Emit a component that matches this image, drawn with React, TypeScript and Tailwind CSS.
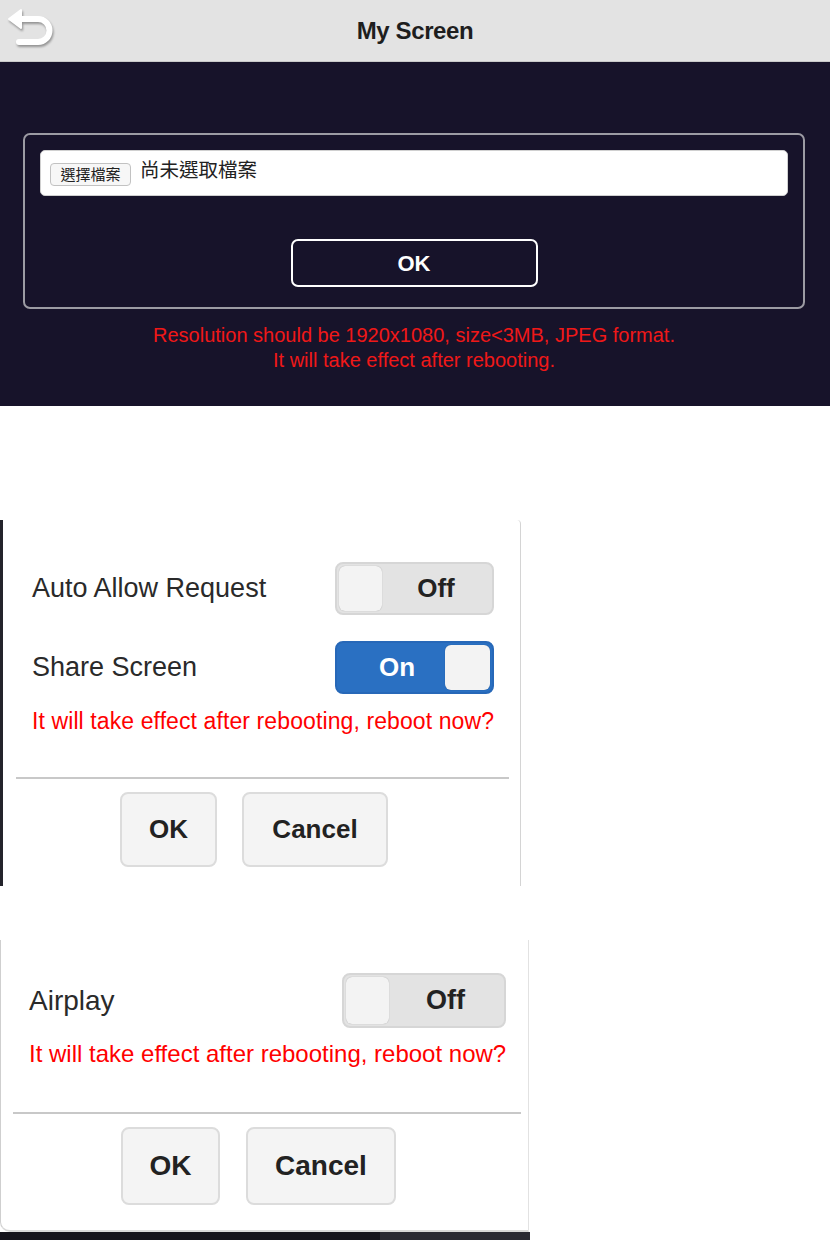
import React, { useState } from 'react';

const sans = { fontFamily: '"Liberation Sans", Arial, sans-serif' };
const cjk = { fontFamily: '"Liberation Sans", "Noto Sans CJK TC", sans-serif' };

const BackIcon: React.FC = () => (
  <svg width="52" height="48" viewBox="0 0 52 48" className="drop-shadow-[1px_2px_1px_rgba(0,0,0,0.35)]">
    <path d="M11 15 H34 A11.5 11.5 0 0 1 34 38 H15" fill="none" stroke="#ffffff" strokeWidth="6" strokeLinecap="round" />
    <path d="M5 15 L17 6 L17 24 Z" fill="#ffffff" strokeLinejoin="round" stroke="#ffffff" strokeWidth="2" />
  </svg>
);

const Toggle: React.FC<{ on: boolean; onClick: () => void; size: string; text: string }> = ({ on, onClick, size, text }) => (
  <button
    onClick={onClick}
    className={`relative ${size} rounded-[8px] border-2 flex items-center p-[2px] shrink-0 ${
      on ? 'bg-[#2a70c2] border-[#2768b8] justify-end' : 'bg-[#e3e3e3] border-[#d6d6d6] justify-start'
    }`}
  >
    {on ? (
      <>
        <span className={`flex-1 text-center pl-[10px] text-white font-bold ${text}`} style={sans}>On</span>
        <span className="w-[45px] h-full rounded-[6px] bg-[#f3f3f3] shadow-[0_0_1px_rgba(0,0,0,0.3)]" />
      </>
    ) : (
      <>
        <span className="w-[43px] h-full rounded-[6px] bg-[#f3f3f3] shadow-[0_0_1px_rgba(0,0,0,0.3)]" />
        <span className={`flex-1 text-center text-[#222] font-bold ${text}`} style={sans}>Off</span>
      </>
    )}
  </button>
);

const DlgButton: React.FC<{ label: string; w: string; text: string }> = ({ label, w, text }) => (
  <button className={`${w} h-full rounded-[8px] bg-[#f4f4f4] border-2 border-[#dcdcdc] ${text} font-bold text-[#222]`} style={sans}>
    {label}
  </button>
);

export default function App() {
  const [autoAllow, setAutoAllow] = useState(false);
  const [share, setShare] = useState(true);
  const [airplay, setAirplay] = useState(false);

  return (
    <div className="w-[830px] h-[1240px] bg-white overflow-hidden" style={sans}>
      {/* Header */}
      <div className="h-[62px] bg-[#e3e3e3] border-b border-[#c9c9c9] flex items-center relative">
        <div className="absolute left-[4px] top-[4px]"><BackIcon /></div>
        <div className="flex-1 text-center text-[24px] font-bold text-[#1e1e1e] tracking-[-0.4px]">My Screen</div>
      </div>

      {/* My Screen upload */}
      <div className="h-[344px] bg-[#17132a] pt-[71px] pl-[23px] pr-[25px]">
        <div className="h-[176px] border-2 border-[#9c9ba3] rounded-[7px] pt-[15px] px-[15px]">
          <div className="h-[46px] bg-white rounded-[5px] border border-[#d0d0d0] flex items-center pl-[9px] gap-[9px]">
            <button className="h-[23px] w-[81px] rounded-[4px] border border-[#c2c2c2] bg-[#f7f7f7] text-[15px] text-[#222] leading-none mt-[2px]" style={cjk}>選擇檔案</button>
            <span className="text-[19.5px] text-[#222] -mt-[4px]" style={cjk}>尚未選取檔案</span>
          </div>
          <div className="flex justify-center mt-[43px]">
            <button className="w-[247px] h-[48px] border-2 border-white rounded-[7px] text-white text-[22px] font-bold">OK</button>
          </div>
        </div>
        <div className="mt-[14px] text-center text-[#f01818] text-[20px] leading-[25px]">
          <div>Resolution should be 1920x1080, size&lt;3MB, JPEG format.</div>
          <div>It will take effect after rebooting.</div>
        </div>
      </div>

      <div className="h-[114px]" />

      {/* Share screen dialog */}
      <div className="w-[521px] h-[366px] bg-white border-l-[3px] border-l-[#23232b] border-r border-r-[#d4d4d4] rounded-tr-[4px] flex flex-col">
        <div className="pt-[42px] pl-[29px] pr-[26px] flex flex-col shrink-0">
          <div className="flex items-center justify-between">
            <span className="text-[27px] text-[#2a2a2a]">Auto Allow Request</span>
            <Toggle on={autoAllow} onClick={() => setAutoAllow(!autoAllow)} size="w-[159px] h-[53px]" text="text-[26px]" />
          </div>
          <div className="flex items-center justify-between mt-[26px]">
            <span className="text-[27px] text-[#2a2a2a]">Share Screen</span>
            <Toggle on={share} onClick={() => setShare(!share)} size="w-[159px] h-[53px]" text="text-[26px]" />
          </div>
          <div className="mt-[13px] text-[23px] leading-[28px] text-[#ff0000] whitespace-nowrap tracking-[0.1px]">It will take effect after rebooting, reboot now?</div>
        </div>
        <div className="ml-[13px] mr-[11px] mt-[42px] h-[2px] shrink-0 bg-[#c8c8c8]" />
        <div className="flex justify-center gap-[25px] h-[75px] shrink-0 mt-[13px] pr-[15px]">
          <DlgButton label="OK" w="w-[97px]" text="text-[26px]" />
          <DlgButton label="Cancel" w="w-[146px]" text="text-[26px]" />
        </div>
      </div>

      <div className="h-[54px]" />

      {/* Airplay dialog */}
      <div className="w-[529px] h-[292px] bg-white border-l border-l-[#cfcfcf] border-r border-r-[#e2e2e2] border-b-2 border-b-[#d8d8d8] rounded-bl-[10px] flex flex-col">
        <div className="pt-[33px] pl-[28px] pr-[22px] flex flex-col shrink-0">
          <div className="flex items-center justify-between">
            <span className="text-[28px] text-[#2a2a2a]">Airplay</span>
            <Toggle on={airplay} onClick={() => setAirplay(!airplay)} size="w-[164px] h-[55px]" text="text-[27px]" />
          </div>
          <div className="mt-[12px] text-[24px] leading-[28px] text-[#ff0000] whitespace-nowrap">It will take effect after rebooting, reboot now?</div>
        </div>
        <div className="ml-[12px] mr-[7px] mt-[44px] h-[2px] shrink-0 bg-[#c8c8c8]" />
        <div className="flex justify-center gap-[26px] h-[78px] shrink-0 mt-[13px] pr-[12px]">
          <DlgButton label="OK" w="w-[99px]" text="text-[28px]" />
          <DlgButton label="Cancel" w="w-[150px]" text="text-[28px]" />
        </div>
      </div>
      <div className="flex h-[8px]">
        <div className="w-[380px] bg-[#15141c]" />
        <div className="w-[150px] bg-[#2a2a33]" />
      </div>
    </div>
  );
}
